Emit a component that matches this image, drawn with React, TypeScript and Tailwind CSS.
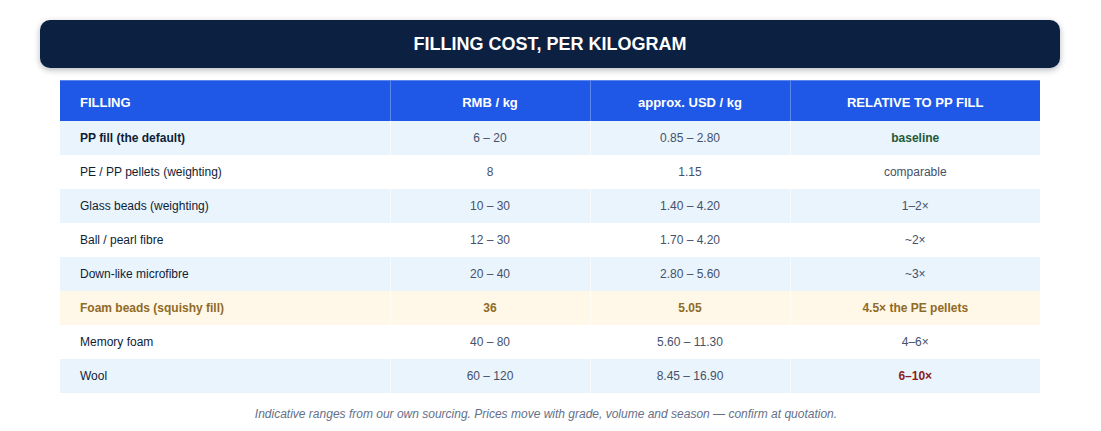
const ROWS: { name: string; rmb: string; usd: string; rel: string; tone?: 'base' | 'foam' | 'high'; shade?: boolean }[] = [
  { name: 'PP fill (the default)', rmb: '6 – 20', usd: '0.85 – 2.80', rel: 'baseline', tone: 'base', shade: true },
  { name: 'PE / PP pellets (weighting)', rmb: '8', usd: '1.15', rel: 'comparable' },
  { name: 'Glass beads (weighting)', rmb: '10 – 30', usd: '1.40 – 4.20', rel: '1–2×', shade: true },
  { name: 'Ball / pearl fibre', rmb: '12 – 30', usd: '1.70 – 4.20', rel: '~2×' },
  { name: 'Down-like microfibre', rmb: '20 – 40', usd: '2.80 – 5.60', rel: '~3×', shade: true },
  { name: 'Foam beads (squishy fill)', rmb: '36', usd: '5.05', rel: '4.5× the PE pellets', tone: 'foam' },
  { name: 'Memory foam', rmb: '40 – 80', usd: '5.60 – 11.30', rel: '4–6×' },
  { name: 'Wool', rmb: '60 – 120', usd: '8.45 – 16.90', rel: '6–10×', tone: 'high', shade: true },
];

export default function App() {
  return (
    <div className="min-h-[431px] w-[1100px] bg-white px-10 pt-5 font-['Liberation_Sans',Arial,sans-serif]">
      {/* Title bar */}
      <div className="flex h-12 items-center justify-center rounded-[10px] bg-[#0c2141] shadow-[0_2px_6px_rgba(15,23,42,0.3)]">
        <h1 className="text-[18px] font-bold text-white">FILLING COST, PER KILOGRAM</h1>
      </div>

      <div className="mx-5 mt-3">
        <table className="w-full table-fixed border-collapse text-[12px]">
          <colgroup>
            <col className="w-[330px]" />
            <col className="w-[200px]" />
            <col className="w-[200px]" />
            <col className="w-[250px]" />
          </colgroup>
          <thead>
            <tr className="h-10 border-t border-[#5b86ee] bg-[#1f58e7] text-[13px] font-bold text-white">
              <th className="border-r border-[#5b86ee] pt-1 pl-5 text-left">FILLING</th>
              <th className="border-r border-[#5b86ee] pt-1 text-center">RMB / kg</th>
              <th className="border-r border-[#5b86ee] pt-1 text-center">approx. USD / kg</th>
              <th className="pt-1 text-center">RELATIVE TO PP FILL</th>
            </tr>
          </thead>
          <tbody>
            {ROWS.map((r) => {
              const foam = r.tone === 'foam';
              const bg = foam ? 'bg-[#fff7e8]' : r.shade ? 'bg-[#eaf4fd]' : 'bg-white';
              const strong = r.tone === 'base' || foam;
              return (
                <tr key={r.name} className={`h-[34px] ${bg}`}>
                  <td
                    className={`border-r border-white/60 pt-px pl-5 ${
                      foam ? 'font-bold text-[#8f6b26]' : strong ? 'font-bold text-[#0f1d36]' : 'text-[#0f1d36]'
                    }`}
                  >
                    {r.name}
                  </td>
                  <td className={`border-r border-white/60 pt-px text-center ${foam ? 'font-bold text-[#8f6b26]' : 'text-[#44516a]'}`}>
                    {r.rmb}
                  </td>
                  <td className={`border-r border-white/60 pt-px text-center ${foam ? 'font-bold text-[#8f6b26]' : 'text-[#44516a]'}`}>
                    {r.usd}
                  </td>
                  <td
                    className={`pt-px text-center ${
                      r.tone === 'base'
                        ? 'font-bold text-[#1f5a36]'
                        : foam
                          ? 'font-bold text-[#8f6b26]'
                          : r.tone === 'high'
                            ? 'font-bold text-[#8c1c1c]'
                            : 'text-[#44516a]'
                    }`}
                  >
                    {r.rel}
                  </td>
                </tr>
              );
            })}
          </tbody>
        </table>

        <p className="mt-3 pr-2 text-center text-[12px] italic text-[#64708a]">
          Indicative ranges from our own sourcing. Prices move with grade, volume and season — confirm at quotation.
        </p>
      </div>
    </div>
  );
}
